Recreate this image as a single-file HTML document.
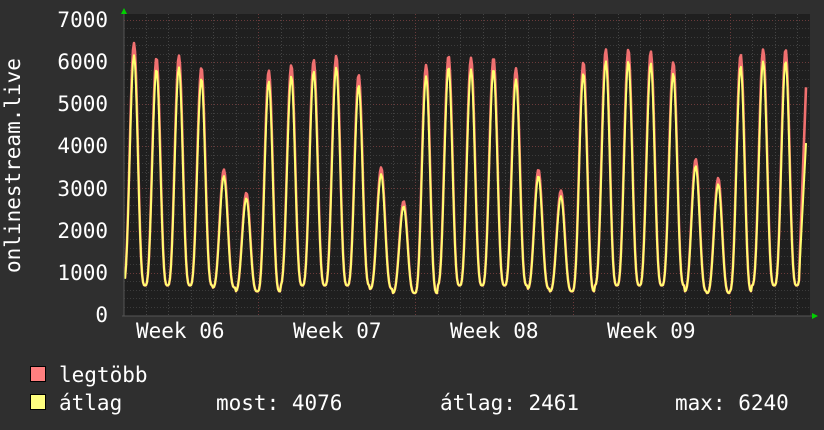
<!DOCTYPE html>
<html><head><meta charset="utf-8"><style>
html,body{margin:0;padding:0;background:#2f2f2f;width:824px;height:430px;overflow:hidden}
svg{display:block}
text{font-family:"DejaVu Sans Mono","Liberation Mono",monospace;font-size:21px;fill:#fff}
</style></head><body>
<svg id="g" width="824" height="430" xmlns="http://www.w3.org/2000/svg">
<rect x="0" y="0" width="824" height="430" fill="#2f2f2f"/>
<rect x="124" y="14" width="686" height="302" fill="#1f1f1f"/>
<g id="grid"></g>
<path id="red" fill="none" stroke="#f07070" stroke-width="2.6" stroke-linejoin="round"/>
<path id="yel" fill="none" stroke="#ffff70" stroke-width="2" stroke-linejoin="round"/>
<line x1="124" y1="14" x2="124" y2="316" stroke="#555"/>
<line x1="122" y1="316" x2="812" y2="316" stroke="#555"/>
<polygon points="121,14 127,14 124,8" fill="#00d000"/>
<polygon points="812,313 812,319 818,316" fill="#00d000"/>
<g text-anchor="end">
<text x="108" y="27">7000</text><text x="108" y="69">6000</text><text x="108" y="111">5000</text>
<text x="108" y="153">4000</text><text x="108" y="196">3000</text><text x="108" y="238">2000</text>
<text x="108" y="280">1000</text><text x="108" y="322">0</text>
</g>
<text transform="translate(20,273) rotate(-90)">onlinestream.live</text>
<text x="136" y="338">Week 06</text><text x="293" y="338">Week 07</text>
<text x="450" y="338">Week 08</text><text x="607" y="338">Week 09</text>
<rect x="30.5" y="366.5" width="15" height="15" fill="#ff7f7f" stroke="#000"/>
<rect x="30.5" y="394.5" width="15" height="15" fill="#ffff7f" stroke="#000"/>
<text x="59" y="382">legtöbb</text>
<text x="59" y="410">átlag</text>
<text x="216" y="410">most: 4076</text>
<text x="440" y="410">átlag: 2461</text>
<text x="675" y="410">max: 6240</text>
</svg>
<script>
var ns="http://www.w3.org/2000/svg",g=document.getElementById("grid");
function ln(x1,y1,x2,y2,c,d){var l=document.createElementNS(ns,"line");l.setAttribute("x1",x1);l.setAttribute("y1",y1);l.setAttribute("x2",x2);l.setAttribute("y2",y2);l.setAttribute("stroke",c);if(d)l.setAttribute("stroke-dasharray",d);g.appendChild(l);}
function Y(v){return 315-v*0.04217;}
for(var v=200;v<=7000;v+=200){var y=Math.round(Y(v))+0.5;ln(124,y,810,y,v%1000?"#3c3c3c":"#6a3a3a","1,2");}
var day=22.47;
for(var k=-6;k<30;k++){var x=Math.round(730-day*k)+0.5;if(x>124&&x<810){ln(x,14,x,316,k%7==0?"#6a3a3a":"#444","1,2");}}
var peaks=[6450,6100,6150,5870,3450,2900,5800,5930,6050,6150,5700,3500,2700,5930,6150,6100,6100,5850,3450,2950,6000,6300,6300,6250,6000,3700,3250,6180,6300,6300,5400];
var mins=[700,700,700,700,650,560,560,700,700,700,700,620,520,520,700,700,700,700,620,560,560,700,700,700,700,560,520,560,700,700,700];
function val(x,s){var t=(x-134)/day;var i=Math.round(t);var d=t-i;if(i<0)i=0;if(i>30)i=30;
 var p=peaks[i]*s,m=mins[i];var sh=Math.pow((1+Math.cos(2*Math.PI*d))/2,d<0?1.5:1.8);
 return m+(p-m)*sh;}
var r="",yl="";
for(var x=125;x<=806;x+=1){var vr=val(x,1),vy=val(x,0.955);
 if(x>=800){var f=(x-799)/7;vr=900+f*(5400-900);vy=880+f*(4076-880);}
 r+=(x==125?"M":"L")+x+","+Y(vr).toFixed(1);yl+=(x==125?"M":"L")+x+","+Y(vy).toFixed(1);}
document.getElementById("red").setAttribute("d",r);
document.getElementById("yel").setAttribute("d",yl);
</script>
</body></html>
